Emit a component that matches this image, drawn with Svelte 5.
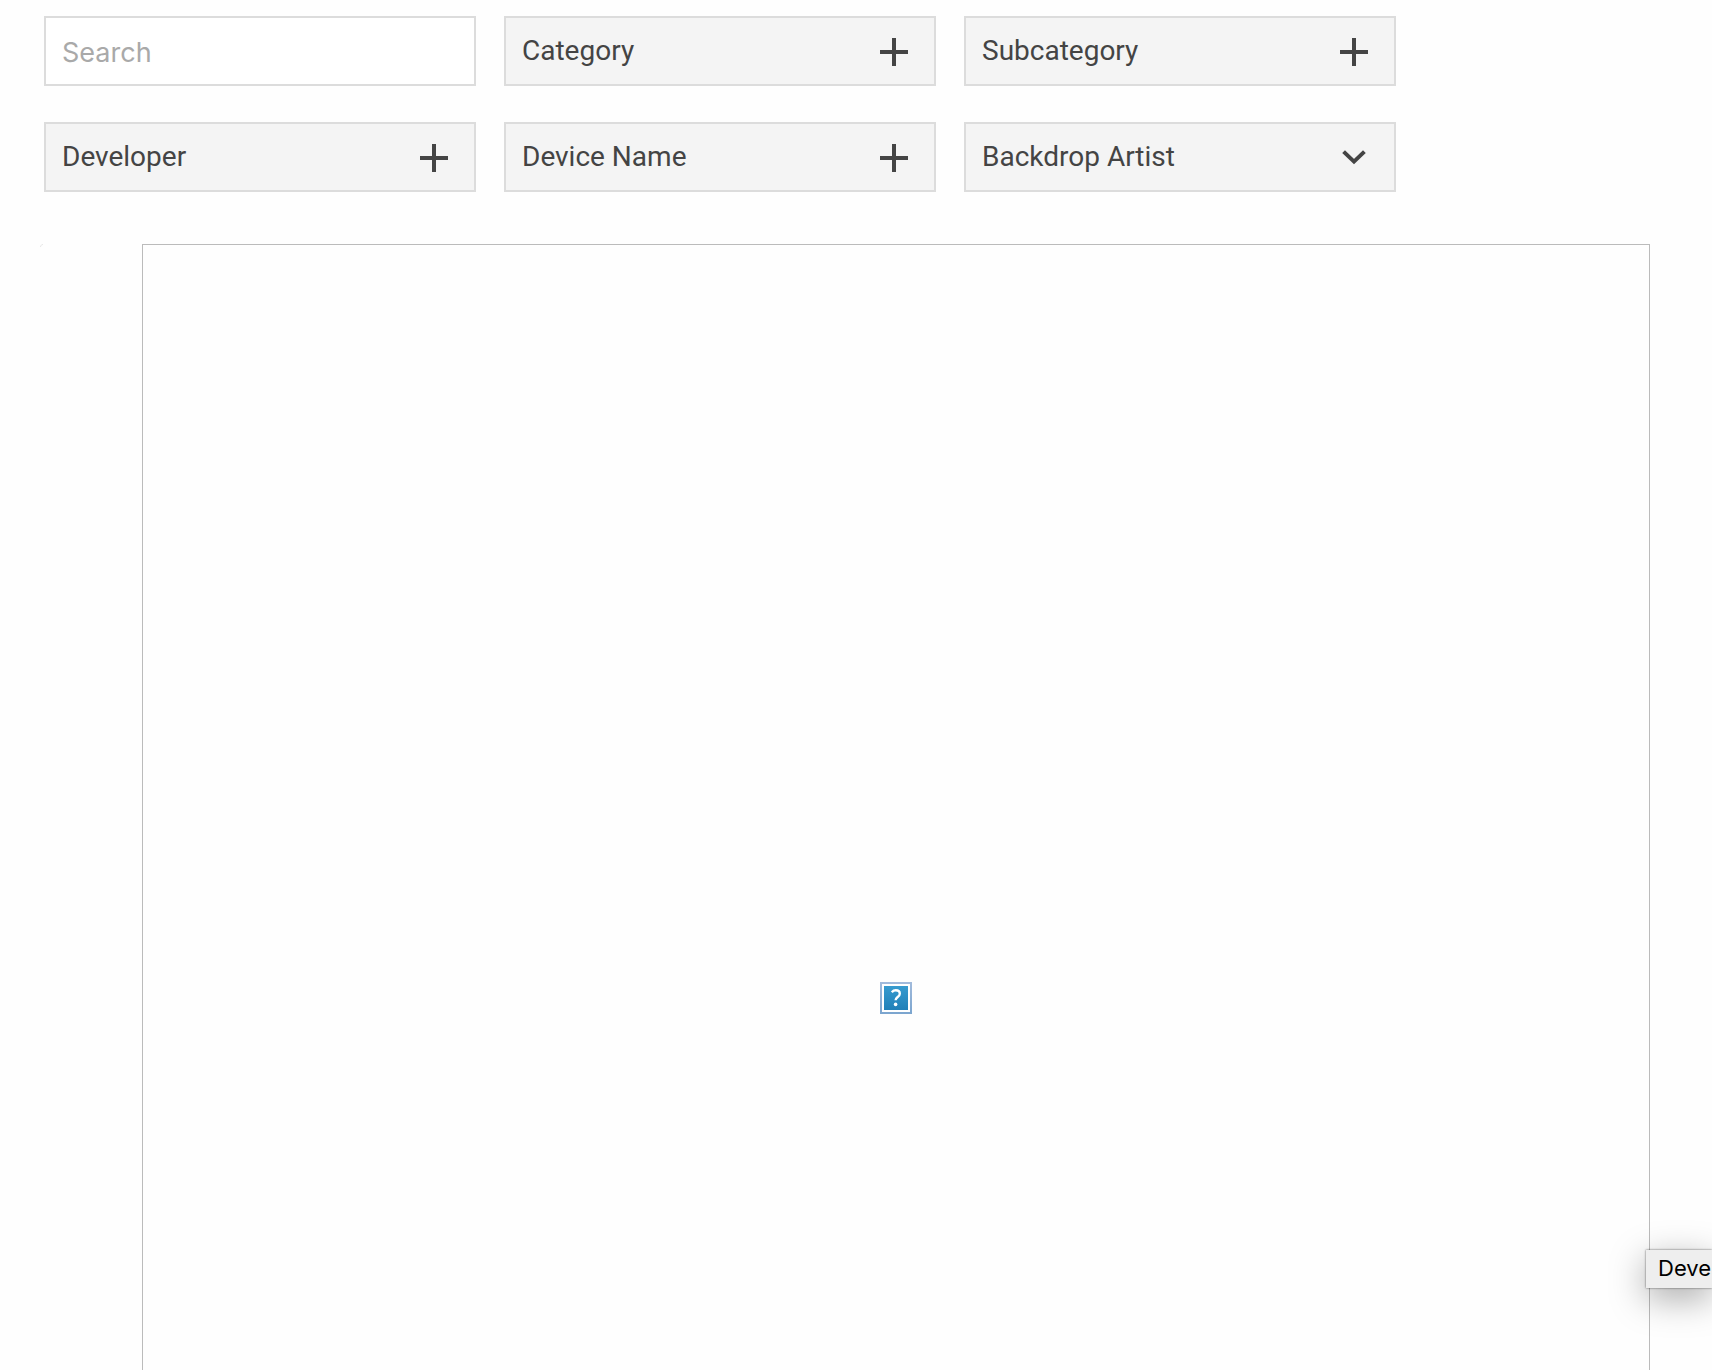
<script lang="ts">
    type Filter = { label: string; icon: "plus" | "chevron" };

    const filters: Filter[] = [
        { label: "Category", icon: "plus" },
        { label: "Subcategory", icon: "plus" },
        { label: "Developer", icon: "plus" },
        { label: "Device Name", icon: "plus" },
        { label: "Backdrop Artist", icon: "chevron" },
    ];

    let search = $state("");
</script>

<main>
    <form class="filters" onsubmit={(e) => e.preventDefault()}>
        <input class="field" type="text" placeholder="Search" aria-label="Search" bind:value={search} />

        {#each filters as filter}
            <button class="field" type="button">
                <span>{filter.label}</span>
                <svg width="28" height="28" viewBox="0 0 28 28" aria-hidden="true">
                    {#if filter.icon === "plus"}
                        <path d="M12 0h4v12h12v4H16v12h-4V16H0v-4h12z" fill="#444" />
                    {:else}
                        <path d="M3.6 7.6 14 17.6 24.4 7.6" fill="none" stroke="#444" stroke-width="4" />
                    {/if}
                </svg>
            </button>
        {/each}
    </form>

    <section class="gallery">
        <svg class="mark" width="4" height="4" viewBox="0 0 4 4" aria-hidden="true">
            <path d="M.5 3C.5 1.5 1.5.5 3 .5" fill="none" stroke="#e8e8e8" />
        </svg>

        <div class="frame">
            <svg width="32" height="32" viewBox="0 0 32 32" role="img" aria-label="Missing image">
                <defs>
                    <linearGradient id="edge" x1="0" y1="0" x2="0" y2="1">
                        <stop offset="0" stop-color="#a2bbdc" />
                        <stop offset="1" stop-color="#7ba5cf" />
                    </linearGradient>
                    <linearGradient id="fill" x1="0" y1="0" x2="0" y2="1">
                        <stop offset="0" stop-color="#379bcf" />
                        <stop offset="1" stop-color="#2180b8" />
                    </linearGradient>
                </defs>
                <rect width="32" height="32" fill="url(#edge)" />
                <rect x="2" y="2" width="28" height="28" fill="#fff" />
                <rect x="4" y="4" width="24" height="24" fill="url(#fill)" />
                <path d="M11.8 10.2C13 8.8 14.3 8.3 15.8 8.3c2.4 0 4 1.3 4 3.4 0 3.3-4.2 3.4-4.2 6.6" fill="none" stroke="#fff" stroke-width="2.4" />
                <circle cx="15.6" cy="22.4" r="1.8" fill="#fff" />
            </svg>
        </div>
    </section>

    <div class="tooltip" role="tooltip">Deve</div>
</main>

<style>
    :global(body) {
        background: #fefefe;
    }

    main {
        position: relative;
        height: 100vh;
        overflow: hidden;
        font-family: Roboto, "Liberation Sans", sans-serif;
    }

    .filters {
        display: grid;
        grid-template-columns: repeat(3, 1fr);
        gap: 36px 28px;
        max-width: 1352px;
        padding: 16px 44px 0;
    }

    .field {
        display: flex;
        align-items: center;
        justify-content: space-between;

        box-sizing: border-box;
        width: 100%;
        min-width: 0;
        height: 70px;
        margin: 0;
        padding: 0 26px 0 16px;

        border: 2px solid #dcdcdc;
        border-radius: 0;
        background: #f4f4f4;
        color: #444;

        font-family: inherit;
        font-size: 28px;
        line-height: 32px;
        text-align: left;
    }

    .field svg {
        flex: none;
        margin-top: 2px;
    }

    input.field {
        padding-top: 2px;
        background: #fff;
        font-family: Inter, sans-serif;
        font-size: 27px;
    }

    input.field::placeholder {
        color: #a9a9a9;
        opacity: 1;
    }

    button.field {
        cursor: pointer;
    }

    .gallery {
        display: flex;
        align-items: flex-start;
        justify-content: space-between;
        padding: 52px 62px 0 40px;
    }

    .mark {
        flex: none;
    }

    .frame {
        display: flex;
        align-items: center;
        justify-content: center;

        box-sizing: border-box;
        flex: 1;
        margin-left: 98px;
        aspect-ratio: 1;
        border: 1px solid #bbb;
    }

    .tooltip {
        position: absolute;
        right: 0;
        bottom: 82px;

        box-sizing: border-box;
        width: 66px;
        height: 38px;
        padding-left: 12px;
        overflow: hidden;

        background: #eee;
        box-shadow: 0 0 2px rgba(0, 0, 0, 0.6), 0 10px 36px rgba(0, 0, 0, 0.35);
        color: #000;

        font-family: Inter, sans-serif;
        font-size: 22px;
        line-height: 36px;
        white-space: nowrap;
    }
</style>
